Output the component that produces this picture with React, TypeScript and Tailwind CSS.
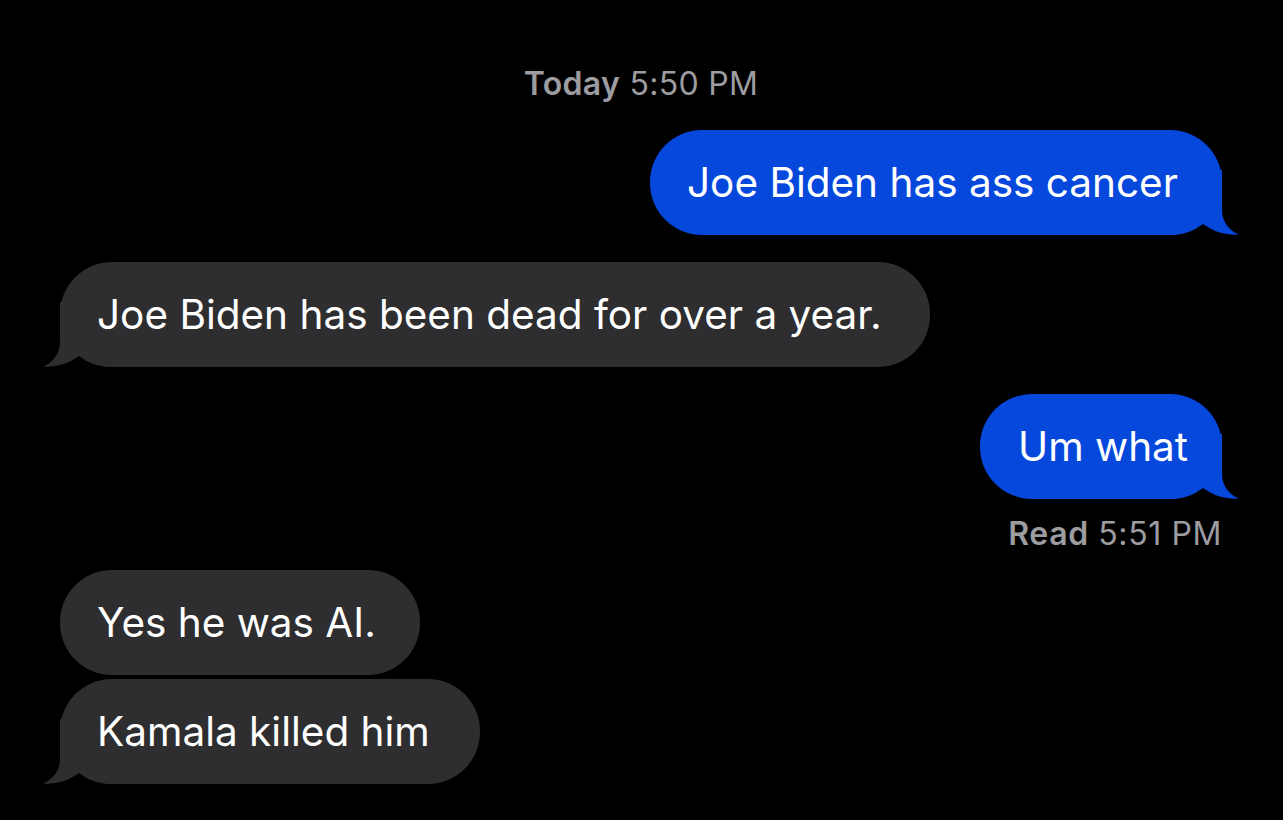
import React from "react";

const BLUE = "#0647dc";
const GRAY = "#2e2e30";

// little curl at the bottom corner of the last bubble in a group
const Tail = ({ color, side }: { color: string; side: "left" | "right" }) => (
  <svg
    width="70"
    height="65"
    viewBox="0 0 70 65"
    className={
      side === "right"
        ? "absolute bottom-0 right-[-17px]"
        : "absolute bottom-0 left-[-17px] -scale-x-100"
    }
  >
    <path
      d="M0 0 L53 0 L53 40 C53 52 60 60 69.5 64.5 C60 65.5 45 62.5 34 54 A52 52 0 0 1 1 65 L0 65 Z"
      fill={color}
    />
  </svg>
);

const Bubble = ({
  text,
  mine,
  width,
  tail,
}: {
  text: string;
  mine?: boolean;
  width: string;
  tail?: boolean;
}) => (
  <div
    className={`relative flex h-[105px] items-center rounded-[52px] pl-[37px] text-[40.5px] leading-[45px] text-white ${width} ${
      mine ? "self-end bg-[#0647dc]" : "self-start bg-[#2e2e30]"
    }`}
  >
    {tail && <Tail color={mine ? BLUE : GRAY} side={mine ? "right" : "left"} />}
    <span className="relative whitespace-nowrap">{text}</span>
  </div>
);

export default function App() {
  return (
    <div
      className="min-h-[820px] w-full bg-black pl-[60px] pr-[61px] pt-[66px]"
      style={{ fontFamily: "Inter, 'Noto Sans', sans-serif" }}
    >
      <div className="flex flex-col">
        {/* day separator */}
        <div className="text-center text-[32px] leading-[36px] tracking-[0.3px] text-[#9c9ca1]">
          <span className="font-semibold">Today</span> 5:50 PM
        </div>

        <div className="mt-[28px] flex flex-col">
          <Bubble text="Joe Biden has ass cancer" mine width="w-[572px] pl-[36px]" tail />
        </div>

        <div className="mt-[27px] flex flex-col">
          <Bubble text="Joe Biden has been dead for over a year." width="w-[870px]" tail />
        </div>

        <div className="mt-[27px] flex flex-col">
          <Bubble text="Um what" mine width="w-[242px] pl-[38px]" tail />
        </div>

        <div className="mt-[17px] text-right text-[32px] leading-[36px] tracking-[0.6px] text-[#9c9ca1]">
          <span className="font-semibold">Read</span> 5:51 PM
        </div>

        <div className="mt-[18px] flex flex-col gap-[4px]">
          <Bubble text="Yes he was AI." width="w-[360px]" />
          <Bubble text="Kamala killed him" width="w-[420px]" tail />
        </div>
      </div>
    </div>
  );
}
